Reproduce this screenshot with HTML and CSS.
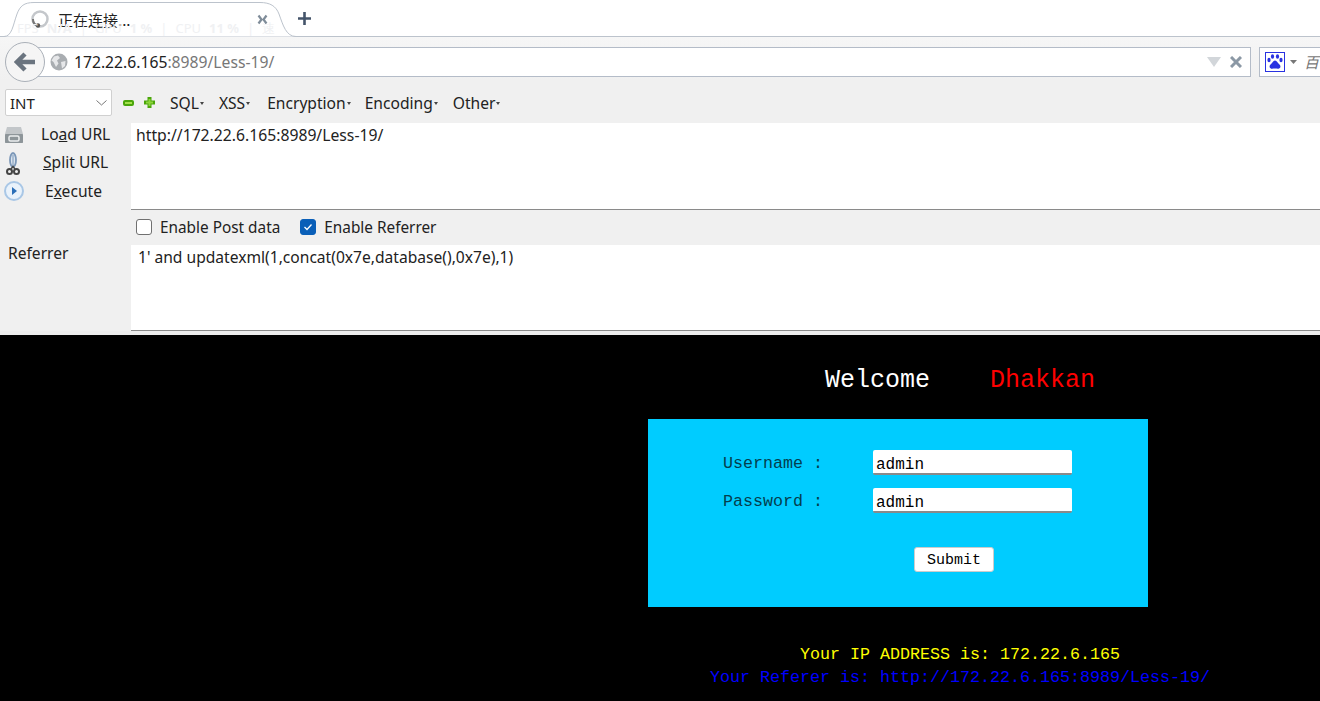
FILE: index.html
```html
<!DOCTYPE html>
<html lang="zh">
<head>
<meta charset="utf-8">
<title>正在连接...</title>
<link rel="stylesheet" href="styles.css">
</head>
<body>
<header class="tabbar">
  <div class="tab">
    <svg class="tab-shape" width="296" height="37" viewBox="0 0 296 37"><path d="M0 36.500H4C12 36.500 13 25 17 14C20 6 24 2.500 34 2.500H260C270 2.500 276 6 279 14C283 25 286 36.500 296 36.500" fill="#fff" stroke="#bcc3cc"/></svg>
    <svg class="spinner" width="20" height="20" viewBox="0 0 20 20"><circle cx="10" cy="10" r="7.500" fill="none" stroke="#c4c7cb" stroke-width="2.500"/><path d="M3 10a7 7 0 0 0 5 7" fill="none" stroke="#777" stroke-width="2"/><circle cx="8" cy="16.500" r="2.200" fill="#555"/></svg>
    <span class="tab-title">正在连接...</span>
    <svg class="tab-close" width="11" height="11" viewBox="0 0 11 11"><path d="M1.500 1.500L4.500 5.500L1.500 9.500M9.500 1.500L6.500 5.500L9.500 9.500" fill="none" stroke="#7f8c99" stroke-width="2.200"/></svg>
  </div>
  <svg class="newtab" width="13" height="13" viewBox="0 0 13 13"><path d="M6.500 0V13M0 6.500H13" stroke="#44546a" stroke-width="2.600"/></svg>
  <div class="fps"><span>FPS</span><b>N/A</b><span>|</span><span>GPU</span><b>1 %</b><span>|</span><span>CPU</span><b>11 %</b><span>|</span><span>速</span></div>
</header>

<nav class="navbar">
  <button class="back" aria-label="back"><svg width="22" height="20" viewBox="0 0 22 20"><path d="M11 2L3 10L11 18M4 10H21" fill="none" stroke="#6a747f" stroke-width="4.500"/></svg></button>
  <div class="urlbar">
    <svg class="globe" width="18" height="18" viewBox="0 0 18 18"><circle cx="9" cy="9" r="8.500" fill="#a9adb1"/><path d="M4 3.500L8 2.500L10 5L7 7.500L8.500 10.500L6 14L3.500 9L1.500 7.500ZM11 9L15.500 8L15 13L12 15.500Z" fill="#e6e7e9"/></svg>
    <span class="url"><span class="host">172.22.6.165</span>:8989/Less-19/</span>
    <svg class="dropmark" width="14" height="10" viewBox="0 0 14 10"><path d="M0 0H14L7 10Z" fill="#d2d6da"/></svg>
    <svg class="stop" width="12" height="12" viewBox="0 0 12 12"><path d="M1 1L11 11M11 1L1 11" stroke="#8b98a5" stroke-width="3"/></svg>
  </div>
  <div class="searchbar">
    <svg class="paw" width="20" height="20" viewBox="0 0 20 20"><rect x=".5" y=".5" width="19" height="19" fill="#fff" stroke="#2932e1"/><g fill="#2932e1"><ellipse cx="4" cy="8" rx="1.600" ry="2.200"/><ellipse cx="7.500" cy="4.500" rx="1.600" ry="2.200"/><ellipse cx="12.500" cy="4.500" rx="1.600" ry="2.200"/><ellipse cx="16" cy="8" rx="1.600" ry="2.200"/><path d="M10 8.500C12 8.500 12.500 11 14.500 12.500C16.500 14.500 15 17 13 16.800C11.500 16.500 8.500 16.500 7 16.800C5 17 3.500 14.500 5.500 12.500C7.500 11 8 8.500 10 8.500Z"/></g></svg>
    <svg class="search-drop" width="7" height="4" viewBox="0 0 7 4"><path d="M0 0H7L3.500 4Z" fill="#777"/></svg>
    <span class="search-hint">百</span>
  </div>
</nav>

<section class="hackbar">
  <div class="hb-menu">
    <div class="select"><span>INT</span><svg width="11" height="6" viewBox="0 0 11 6"><path d="M.5 .5L5.500 5L10.500 .5" fill="none" stroke="#777"/></svg></div>
    <svg class="pm minus" width="11" height="6" viewBox="0 0 11 6"><rect width="11" height="6" rx="2" fill="#4aa60a"/><rect x="2" y="2" width="7" height="2" fill="#a4e04c"/></svg>
    <svg class="pm plus" width="11" height="11" viewBox="0 0 11 11"><path d="M3.500 0H7.500V3.500H11V7.500H7.500V11H3.500V7.500H0V3.500H3.500Z" fill="#4aa60a"/><path d="M4.500 2H6.500V4.500H9V6.500H6.500V9H4.500V6.500H2V4.500H4.500Z" fill="#8cd43a"/></svg>
    <span class="menu sql">SQL<i></i></span>
    <span class="menu xss">XSS<i></i></span>
    <span class="menu">Encryption<i></i></span>
    <span class="menu encoding">Encoding<i></i></span>
    <span class="menu">Other<i></i></span>
  </div>
  <div class="hb-url">
    <div class="actions">
      <div class="action">
        <svg class="a-icon" width="20" height="18" viewBox="0 0 20 18"><path d="M3 1H17L19 8V17H1V8Z" fill="#c2c6c9"/><rect x="1" y="8" width="18" height="9" rx="1" fill="#8d9599"/><rect x="5" y="10" width="10" height="5" rx="1.500" fill="none" stroke="#eceeef" stroke-width="1.500"/></svg>
        <span class="a-label load">Lo<u>a</u>d URL</span>
      </div>
      <div class="action">
        <svg class="a-icon" width="14" height="24" viewBox="0 0 14 24"><ellipse cx="7" cy="8" rx="3" ry="7" fill="#dbe4ee" stroke="#7b97b8" stroke-width="1.800"/><path d="M7 3V14" stroke="#7b97b8"/><circle cx="3.500" cy="19.500" r="2.500" fill="none" stroke="#444" stroke-width="2"/><circle cx="10.500" cy="19.500" r="2.500" fill="none" stroke="#444" stroke-width="2"/><path d="M5 17L7 14.500L9 17" fill="none" stroke="#444" stroke-width="1.500"/></svg>
        <span class="a-label split"><u>S</u>plit URL</span>
      </div>
      <div class="action">
        <svg class="a-icon" width="20" height="20" viewBox="0 0 20 20"><circle cx="10" cy="10" r="9" fill="#e9f2fb" stroke="#a9c7e6" stroke-width="2"/><path d="M8 6L13 10L8 14Z" fill="#2c6fb8"/></svg>
        <span class="a-label exec">E<u>x</u>ecute</span>
      </div>
    </div>
    <div class="field url-field">http://172.22.6.165:8989/Less-19/</div>
  </div>
  <div class="checks">
    <label class="check"><span class="box"></span>Enable Post data</label>
    <label class="check"><span class="box on"><svg width="10" height="8" viewBox="0 0 10 8"><path d="M1.500 4L4 6.500L8.500 1.500" fill="none" stroke="#fff" stroke-width="1.300"/></svg></span>Enable Referrer</label>
  </div>
  <div class="hb-ref">
    <div class="ref-label">Referrer</div>
    <div class="field ref-field">1' and updatexml(1,concat(0x7e,database(),0x7e),1)</div>
  </div>
</section>

<main class="page">
  <div class="welcome"><span class="w">Welcome</span><span class="gap"></span><span class="d">Dhakkan</span></div>
  <form class="loginbox">
    <div class="row"><span class="lbl">Username :</span><span class="inp">admin</span></div>
    <div class="row"><span class="lbl">Password :</span><span class="inp">admin</span></div>
    <div class="submit-row"><span class="submit">Submit</span></div>
  </form>
  <div class="ip">Your IP ADDRESS is: 172.22.6.165</div>
  <div class="ref">Your Referer is: http://172.22.6.165:8989/Less-19/</div>
</main>
</body>
</html>
```

FILE: styles.css
```css
* { box-sizing: border-box; }
html, body { margin: 0; padding: 0; height: 701px; width: 1320px; overflow: hidden; background: #000; }
body { font-family: "Noto Sans", "Open Sans", sans-serif; color: #222; }
svg { display: block; flex: none; }

.tabbar { position: relative; height: 37px; background: #fff; display: flex; align-items: center; border-bottom: 1px solid #bcc3cc; }
.tab { position: relative; width: 290px; height: 37px; display: flex; align-items: center; padding: 2px 0 0 30px; flex: none; }
.tab-shape { position: absolute; left: 0; top: 0; }
.spinner, .tab-title, .tab-close { position: relative; }
.tab-title { margin-left: 8px; font: 15px "Noto Sans CJK SC", sans-serif; color: #222; width: 150px; white-space: nowrap; }
.tab-close { margin-left: 49px; }
.newtab { margin-left: 8px; position: relative; }
.fps { position: absolute; left: 17px; top: 21px; display: flex; gap: 8px; font-size: 13px; line-height: 15px; color: #f0f1f3; white-space: nowrap; pointer-events: none; }

.navbar { height: 43px; background: linear-gradient(#f6f6f6, #f0f0f0); display: flex; align-items: center; position: relative; padding: 0 0 0 30px; gap: 8px; }
.back { position: absolute; left: 5px; top: 5px; width: 40px; height: 40px; margin: 0; padding: 0; border-radius: 50%; background: #f5f5f5; border: 1px solid #aab0b8; display: flex; align-items: center; justify-content: center; z-index: 1; }
.urlbar { flex: none; width: 1221px; height: 30px; margin-top: 6px; background: #fff; border: 1px solid #b4bcc8; display: flex; align-items: center; padding-left: 19px; }
.globe { margin-right: 6px; }
.url { font-size: 15.700px; color: #777; flex: 1; }
.host { color: #222; }
.dropmark { margin-right: 9px; }
.stop { margin-right: 8px; }
.searchbar { flex: none; width: 61px; height: 30px; margin-top: 6px; background: #fff; border: 1px solid #b4bcc8; border-right: 0; display: flex; align-items: center; padding-left: 5px; overflow: hidden; }
.search-drop { margin-left: 5px; }
.search-hint { margin-left: 7px; font: italic 15px "Noto Sans CJK SC", sans-serif; color: #777; }

.hackbar { background: #f0f0f0; height: 255px; border-bottom: 4px solid #ededed; }
.hb-menu { height: 43px; display: flex; align-items: center; padding: 2px 0 0 5px; font-size: 15.600px; }
.select { width: 107px; height: 27px; background: #fff; border: 1px solid #d0d0d0; border-radius: 2px; display: flex; align-items: center; justify-content: space-between; padding: 0 4px; font-size: 15px; }
.pm.minus { margin-left: 11px; }
.pm.plus { margin-left: 10px; }
.menu { margin-right: 14px; white-space: nowrap; display: flex; align-items: center; }
.menu i { width: 0; height: 0; margin: 1px 0 0 1px; border: 2.500px solid transparent; border-top: 3px solid #444; border-bottom: 0; }
.sql { margin-left: 15px; margin-right: 15px; }
.xss { margin-right: 17px; }
.encoding { margin-right: 15px; }

.hb-url { display: flex; height: 87px; }
.actions { width: 131px; flex: none; }
.action { position: relative; height: 28.500px; font-size: 15.600px; line-height: 22px; }
.a-icon { position: absolute; }
.action:nth-child(1) .a-icon { left: 4px; top: 3px; }
.action:nth-child(2) .a-icon { left: 6px; top: .5px; }
.action:nth-child(3) .a-icon { left: 4px; top: 1px; }
.a-label { position: absolute; top: 0; white-space: nowrap; }
.load { left: 41px; }
.split { left: 43px; top: -1px; }
.exec { left: 45px; }
.field { flex: 1; background: #fff; font-size: 15.600px; line-height: 22px; border-bottom: 1px solid #8a8a8a; white-space: nowrap; }
.url-field { padding: 1px 0 0 5px; font-size: 15.730px; }
.checks { height: 35px; display: flex; align-items: center; padding: 0 0 2px 136px; gap: 20px; font-size: 15.350px; }
.check { display: flex; align-items: center; gap: 8px; }
.box { width: 16px; height: 16px; border: 1px solid #707070; border-radius: 3px; background: #fff; display: flex; align-items: center; justify-content: center; }
.box.on { background: #0a5fb8; border-color: #0a5fb8; }
.hb-ref { display: flex; height: 86px; }
.ref-label { width: 131px; flex: none; padding: 0 0 0 8px; font-size: 15.600px; line-height: 16px; }
.ref-field { padding: 1px 0 0 7px; }

.page { background: #000; height: 366px; font-family: "Liberation Mono", monospace; position: relative; overflow: hidden; }
.welcome { margin-left: 600px; width: 720px; padding-top: 29px; height: 84px; text-align: center; font-size: 25px; line-height: 34px; color: #fff; white-space: nowrap; }
.gap { display: inline-block; width: 60px; }
.d { color: #f00; }
.loginbox { margin-left: 648px; width: 500px; height: 188px; background: #0cf; padding-top: 31px; font-size: 16.670px; }
.row { display: flex; align-items: center; height: 25px; margin-bottom: 13px; padding-left: 75px; }
.lbl { width: 150px; color: #043e4e; position: relative; top: 1px; }
.inp { width: 199px; height: 25px; background: #fff; border-radius: 2px; border-bottom: 2px solid #8a8a8a; color: #000; font-size: 16px; line-height: 30px; padding-left: 3px; }
.submit-row { padding: 21px 0 0 266px; }
.submit { display: flex; align-items: center; justify-content: center; width: 80px; height: 25px; padding-top: 2px; background: #fff; border: 1px solid #ccc; border-radius: 3px; color: #000; font-size: 15px; }
.ip, .ref { margin-left: 600px; width: 720px; text-align: center; font-size: 16.670px; line-height: 23px; white-space: nowrap; }
.ip { color: #ff0; margin-top: 36px; }
.ref { color: #00f; }
```
